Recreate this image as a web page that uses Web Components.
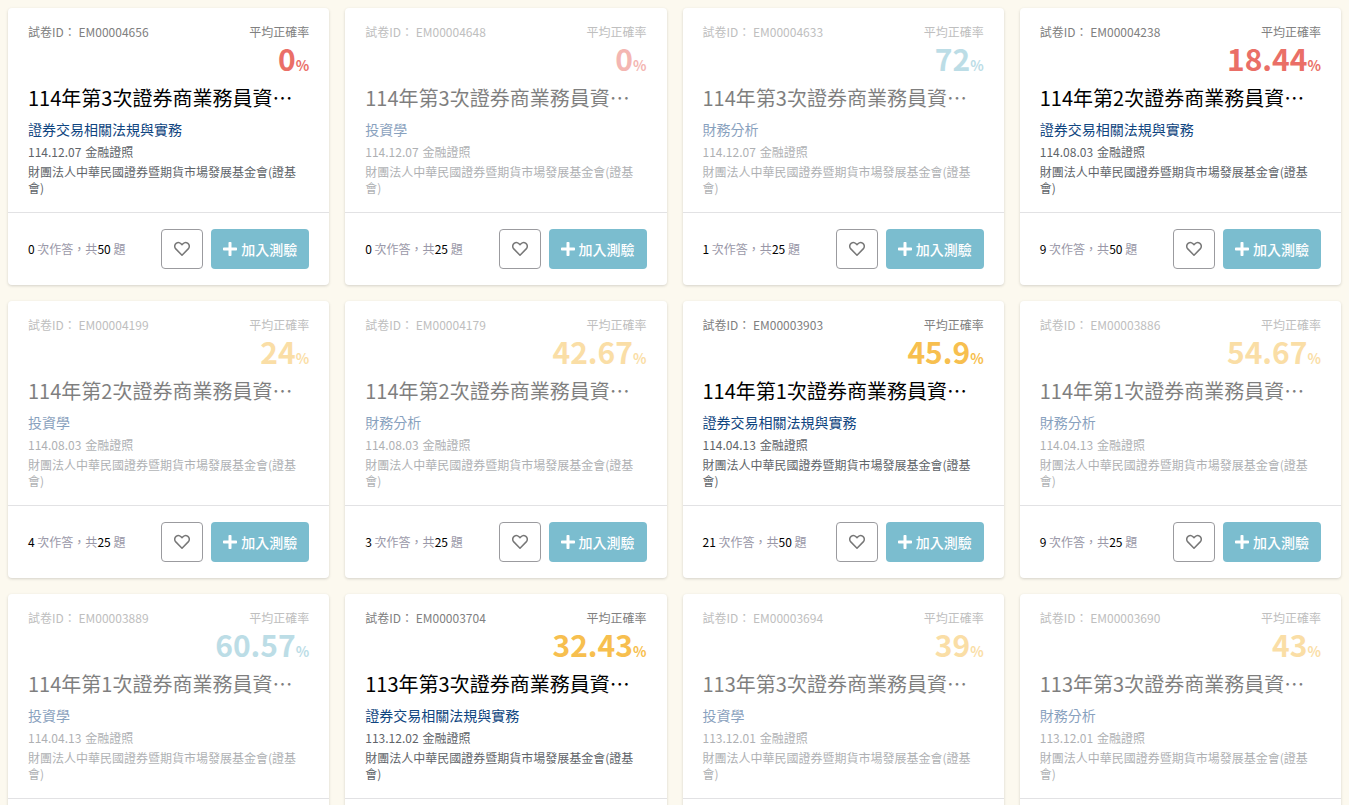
<!DOCTYPE html>
<html lang="zh-Hant">
<head>
  <meta charset="utf-8">
  <meta name="viewport" content="width=device-width, initial-scale=1">
  <title>試卷列表</title>
  <style>
    body {
      margin: 0;
      background: #fcf9ef;
      color: #000;
      font-family: "Noto Sans CJK TC", sans-serif;
    }
  </style>
</head>
<body>
  <exam-list></exam-list>

  <script>
    (function() {
      const template = document.createElement("template");
      template.innerHTML = `
        <style>
          :host {
            display: block;
          }
          button {
            display: flex;
            align-items: center;
            justify-content: center;
            gap: 4px;
            box-sizing: border-box;
            height: 40px;
            padding: 0 12px;
            border: 1px solid #9b9b9f;
            border-radius: 4px;
            background: #fff;
            color: #777;
            font: inherit;
            font-size: 14px;
            font-weight: 500;
            line-height: 20px;
            white-space: nowrap;
            cursor: pointer;
          }
          :host([primary]) button {
            border: 0;
            background: #7bbdcf;
            color: #fff;
          }
        </style>
        <button type="button"><slot name="icon"></slot><slot></slot></button>
      `;
      class ExamButton extends HTMLElement {
        constructor() {
          super();
          this.attachShadow({ mode: "open" });
          this.shadowRoot.appendChild(template.content.cloneNode(true));
        }

        connectedCallback() {
          const label = this.getAttribute("label");
          if (label) {
            this.shadowRoot.querySelector("button").setAttribute("aria-label", label);
          }
        }
      }

      window.customElements.define("exam-button", ExamButton);
    })();

    (function() {
      const template = document.createElement("template");
      template.innerHTML = `
        <style>
          :host {
            display: flex;
            flex-direction: column;
            min-width: 0;
            border-radius: 4px;
            background: #fff;
            box-shadow: 0 1px 3px rgba(0, 0, 0, 0.16);
            font-size: 12px;
            line-height: 16px;
          }
          h2, p {
            margin: 0;
            font-weight: 400;
          }
          .info {
            flex: 1;
            padding: 16px 20px;
          }
          :host([muted]) .info {
            opacity: 0.5;
          }
          .head {
            display: flex;
            justify-content: space-between;
            color: #808080;
          }
          .rate {
            display: flex;
            align-items: baseline;
            justify-content: flex-end;
            height: 36px;
            font-size: 14px;
            font-weight: 700;
            color: #ea6f67;
          }
          .rate b {
            font-size: 30px;
            font-weight: 700;
            line-height: 36px;
          }
          .rate.mid {
            color: #f7bf4f;
          }
          .rate.high {
            color: #7bbdcf;
          }
          .title {
            margin-top: 8px;
            overflow: hidden;
            font-size: 20px;
            line-height: 28px;
            text-overflow: ellipsis;
            white-space: nowrap;
          }
          .subject {
            margin-top: 8px;
            font-size: 14px;
            line-height: 18px;
            color: #0f4580;
          }
          .date {
            display: flex;
            gap: 4px;
            margin-top: 6px;
            color: #606469;
          }
          .issuer {
            margin-top: 4px;
            color: #606469;
          }
          .foot {
            display: flex;
            align-items: center;
            gap: 8px;
            padding: 16px 20px;
            border-top: 1px solid #e2e2e4;
          }
          .count {
            flex: 1;
            color: #9a98a8;
          }
          .count b {
            font-weight: 400;
            color: #000;
          }
          svg {
            display: block;
          }
        </style>
        <div class="info">
          <div class="head">
            <span>試卷ID： <span class="id"></span></span>
            <span>平均正確率</span>
          </div>
          <div class="rate"><b class="value"></b><span>%</span></div>
          <h2 class="title"></h2>
          <p class="subject"></p>
          <p class="date"><span class="day"></span><span>金融證照</span></p>
          <p class="issuer">財團法人中華民國證券暨期貨市場發展基金會(證基會)</p>
        </div>
        <div class="foot">
          <div class="count"><b class="answered"></b> 次作答，共<b class="total"></b> 題</div>
          <exam-button label="收藏">
            <svg slot="icon" width="16" height="16" viewBox="0 0 16 16" fill="none" stroke="currentColor" stroke-width="1.5" stroke-linejoin="round">
              <path d="M8 14.2 1.8 7.9C.2 6.2.4 3.6 2.1 2.3c1.5-1.1 3.6-.9 4.9.4l1 1 1-1c1.3-1.3 3.4-1.5 4.9-.4 1.7 1.3 1.9 3.9.3 5.6Z"/>
            </svg>
          </exam-button>
          <exam-button primary>
            <svg slot="icon" width="14" height="14" viewBox="0 0 14 14" fill="currentColor">
              <path d="M6.3 0h1.4q.8 0 .8.8v4.7h4.7q.8 0 .8.8v1.4q0 .8-.8.8H8.5v4.7q0 .8-.8.8H6.3q-.8 0-.8-.8V8.5H.8Q0 8.5 0 7.7V6.3q0-.8.8-.8h4.7V.8q0-.8.8-.8Z"/>
            </svg>
            加入測驗
          </exam-button>
        </div>
      `;
      class ExamCard extends HTMLElement {
        constructor() {
          super();
          this.attachShadow({ mode: "open" });
          this.shadowRoot.appendChild(template.content.cloneNode(true));
          this.rate = this.shadowRoot.querySelector(".rate");
        }

        connectedCallback() {
          const exam = this.exam;
          this.setText(".id", exam.id);
          this.setText(".value", exam.rate);
          this.setText(".title", `${exam.title}證券商業務員資格測驗`);
          this.setText(".subject", exam.subject);
          this.setText(".day", exam.date);
          this.setText(".answered", exam.answered);
          this.setText(".total", exam.total);
          if (exam.rate >= 60) {
            this.rate.classList.add("high");
          } else if (exam.rate >= 20) {
            this.rate.classList.add("mid");
          }
        }

        setText(selector, text) {
          this.shadowRoot.querySelector(selector).textContent = text;
        }
      }

      window.customElements.define("exam-card", ExamCard);
    })();

    (function() {
      const LAW = "證券交易相關法規與實務";
      const INVEST = "投資學";
      const FINANCE = "財務分析";
      const exams = [
        { id: "EM00004656", rate: "0", title: "114年第3次", subject: LAW, date: "114.12.07", answered: 0, total: 50 },
        { id: "EM00004648", rate: "0", title: "114年第3次", subject: INVEST, date: "114.12.07", answered: 0, total: 25 },
        { id: "EM00004633", rate: "72", title: "114年第3次", subject: FINANCE, date: "114.12.07", answered: 1, total: 25 },
        { id: "EM00004238", rate: "18.44", title: "114年第2次", subject: LAW, date: "114.08.03", answered: 9, total: 50 },
        { id: "EM00004199", rate: "24", title: "114年第2次", subject: INVEST, date: "114.08.03", answered: 4, total: 25 },
        { id: "EM00004179", rate: "42.67", title: "114年第2次", subject: FINANCE, date: "114.08.03", answered: 3, total: 25 },
        { id: "EM00003903", rate: "45.9", title: "114年第1次", subject: LAW, date: "114.04.13", answered: 21, total: 50 },
        { id: "EM00003886", rate: "54.67", title: "114年第1次", subject: FINANCE, date: "114.04.13", answered: 9, total: 25 },
        { id: "EM00003889", rate: "60.57", title: "114年第1次", subject: INVEST, date: "114.04.13", answered: 7, total: 25 },
        { id: "EM00003704", rate: "32.43", title: "113年第3次", subject: LAW, date: "113.12.02", answered: 14, total: 50 },
        { id: "EM00003694", rate: "39", title: "113年第3次", subject: INVEST, date: "113.12.01", answered: 4, total: 25 },
        { id: "EM00003690", rate: "43", title: "113年第3次", subject: FINANCE, date: "113.12.01", answered: 4, total: 25 }
      ];

      const template = document.createElement("template");
      template.innerHTML = `
        <style>
          :host {
            display: grid;
            grid-template-columns: repeat(auto-fill, minmax(300px, 1fr));
            gap: 16px;
            padding: 8px;
          }
        </style>
      `;
      class ExamList extends HTMLElement {
        constructor() {
          super();
          this.attachShadow({ mode: "open" });
          this.shadowRoot.appendChild(template.content.cloneNode(true));
        }

        connectedCallback() {
          exams.forEach(exam => {
            const card = document.createElement("exam-card");
            card.exam = exam;
            // only the law papers are open, the others are dimmed
            card.toggleAttribute("muted", exam.subject !== LAW);
            this.shadowRoot.appendChild(card);
          });
        }
      }

      window.customElements.define("exam-list", ExamList);
    })();
  </script>
</body>
</html>
